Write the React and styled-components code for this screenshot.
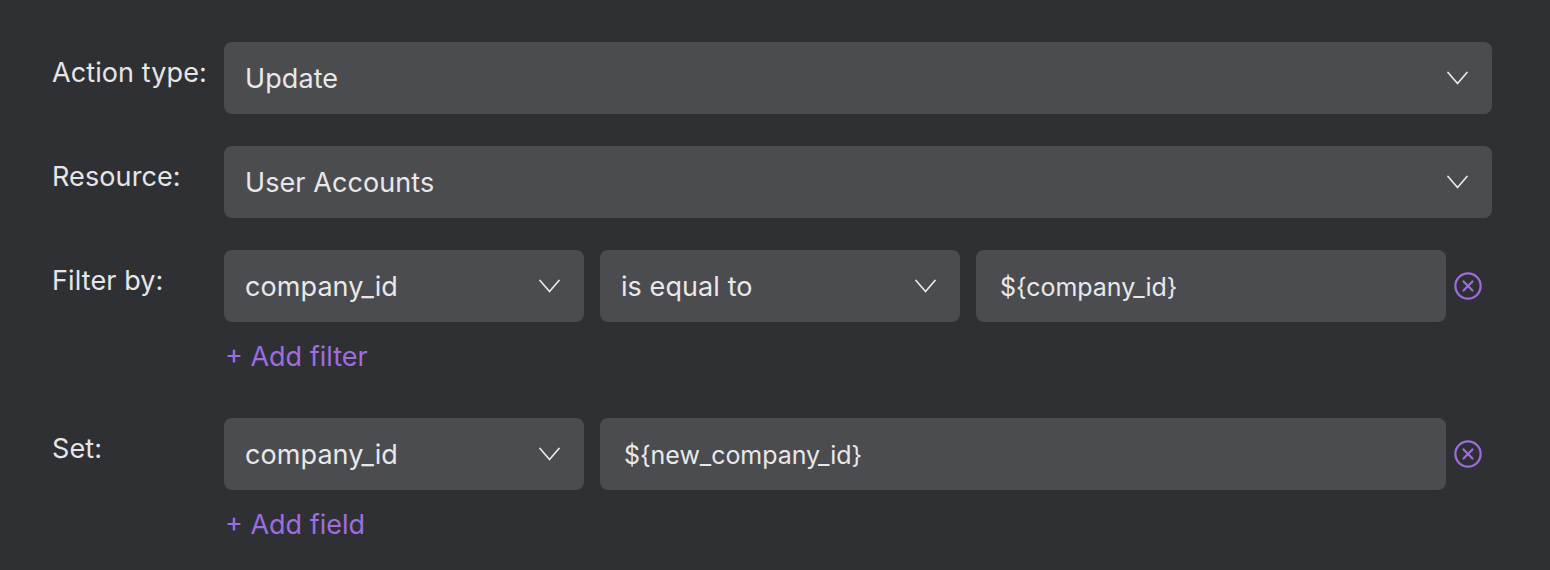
import React from 'react';
import styled, { createGlobalStyle } from 'styled-components';

const GlobalStyle = createGlobalStyle`
  html, body {
    margin: 0;
    background: #2f3034;
  }
  body {
    font-family: Inter, "Liberation Sans", sans-serif;
  }
`;

const Chevron = () => (
  <ChevronIcon viewBox="0 0 21 14" fill="none">
    <path d="M1 1.5 L10.5 12.5 L20 1.5" stroke="#e8e8ea" strokeWidth="1.7" strokeLinecap="round" strokeLinejoin="round" />
  </ChevronIcon>
);

const RemoveIcon = () => (
  <RemoveSvg viewBox="0 0 28 28" fill="none">
    <circle cx="14" cy="14" r="12.6" stroke="#9e6de0" strokeWidth="2.2" />
    <path d="M9.5 9.5 L18.5 18.5 M18.5 9.5 L9.5 18.5" stroke="#9e6de0" strokeWidth="2.2" strokeLinecap="round" />
  </RemoveSvg>
);

const Select = ({ value, width }) => (
  <SelectBox $width={width}>
    <span>{value}</span>
    <Chevron />
  </SelectBox>
);

const App = () => (
  <Page>
    <GlobalStyle />
    <Row>
      <Label>Action type:</Label>
      <Controls>
        <Select value="Update" />
      </Controls>
    </Row>
    <Row>
      <Label>Resource:</Label>
      <Controls>
        <Select value="User Accounts" />
      </Controls>
    </Row>
    <Row>
      <Label>Filter by:</Label>
      <Stack>
        <Controls>
          <Select value="company_id" width="360px" />
          <Select value="is equal to" width="360px" />
          <ValueInput>{'${company_id}'}</ValueInput>
          <RemoveIcon />
        </Controls>
        <AddLink>+ Add filter</AddLink>
      </Stack>
    </Row>
    <Row>
      <Label>Set:</Label>
      <Stack>
        <Controls>
          <Select value="company_id" width="360px" />
          <ValueInput>{'${new_company_id}'}</ValueInput>
          <RemoveIcon />
        </Controls>
        <AddLink>+ Add field</AddLink>
      </Stack>
    </Row>
  </Page>
);

const Page = styled.div`
  width: 1550px;
  height: 570px;
  box-sizing: border-box;
  padding: 42px 58px 0 52px;
  display: flex;
  flex-direction: column;
  gap: 32px;
  background: #2f3034;
  overflow: hidden;
`;

const Row = styled.div`
  display: flex;
  align-items: flex-start;
`;

const Label = styled.div`
  width: 172px;
  flex: none;
  padding-top: 13px;
  font-size: 27px;
  line-height: 36px;
  letter-spacing: 0.1px;
  color: #e6e6e8;
`;

const Stack = styled.div`
  flex: 1;
  display: flex;
  flex-direction: column;
`;

const Controls = styled.div`
  flex: 1;
  display: flex;
  align-items: center;
  gap: 16px;
`;

const SelectBox = styled.div`
  flex: ${({ $width }) => ($width ? `0 0 ${$width}` : '1')};
  height: 72px;
  box-sizing: border-box;
  padding: 0 24px 0 21px;
  display: flex;
  align-items: center;
  justify-content: space-between;
  background: #4b4c50;
  border-radius: 8px;
  font-size: 27px;
  letter-spacing: 0.08px;
  color: #e8e8ea;
`;

const ValueInput = styled.div`
  flex: 1;
  height: 72px;
  box-sizing: border-box;
  padding: 1px 24px 0;
  display: flex;
  align-items: center;
  background: #4b4c50;
  border-radius: 8px;
  font-size: 25px;
  letter-spacing: -0.05px;
  color: #e8e8ea;
`;

const ChevronIcon = styled.svg`
  width: 21px;
  height: 14px;
  flex: none;
`;

const RemoveSvg = styled.svg`
  width: 28px;
  height: 28px;
  flex: none;
  margin: 0 10px 0 -8px;
`;

const AddLink = styled.div`
  margin: 17px 0 11px;
  padding-left: 1px;
  font-size: 27px;
  line-height: 36px;
  color: #9e6de0;
`;

export default App;
